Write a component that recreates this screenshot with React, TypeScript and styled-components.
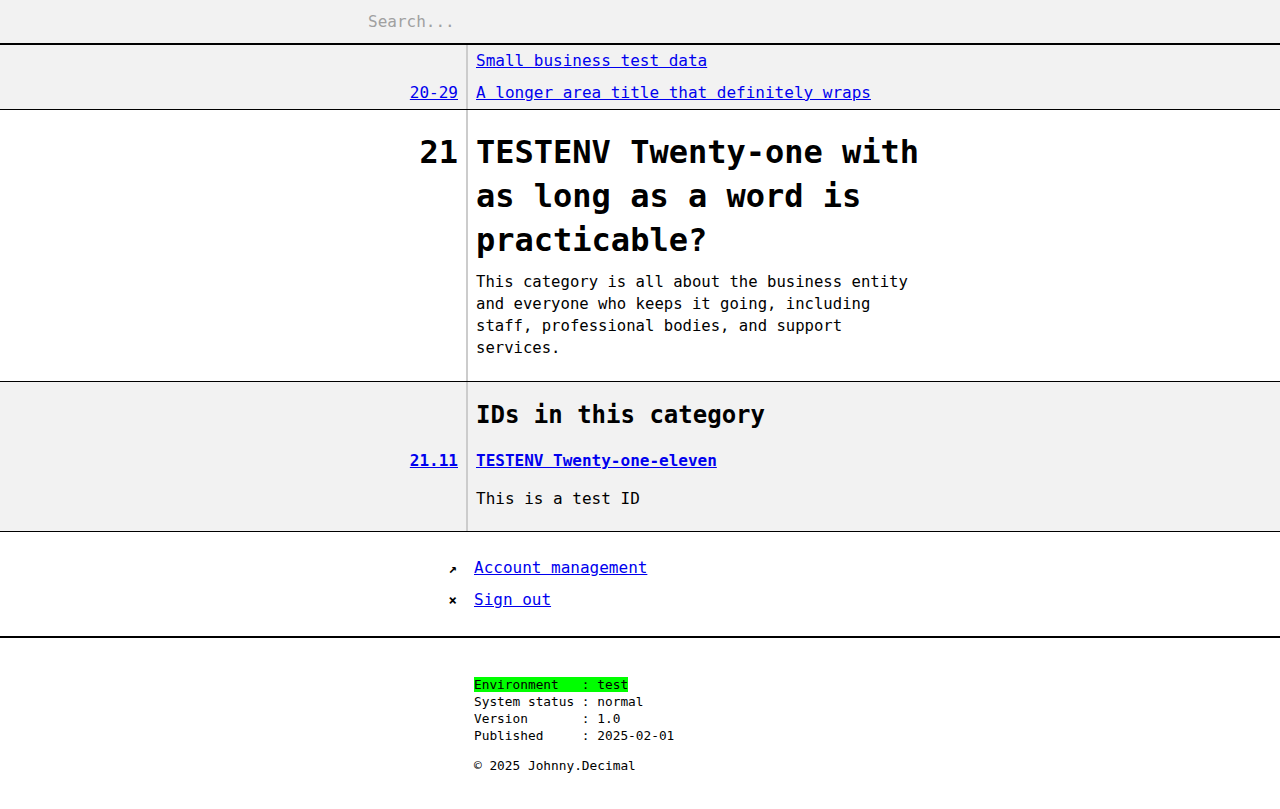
import React from "react";
import styled, { createGlobalStyle } from "styled-components";

const GlobalStyle = createGlobalStyle`
  html, body { margin: 0; padding: 0; background: #fff; }
  body {
    font-family: "DejaVu Sans Mono", "Liberation Mono", monospace;
    font-size: 16px;
    color: #000;
  }
  a { color: #0000ee; }
`;

const SearchBar = styled.header`
  height: 43px;
  background: #f2f2f2;
  border-bottom: 2px solid #000;
  display: flex;
  justify-content: center;
  align-items: center;
`;

const SearchInput = styled.input`
  width: 544px;
  border: none;
  background: transparent;
  font-family: inherit;
  font-size: 16px;
  padding: 0;
  outline: none;
  color: #000;
  &::placeholder { color: #a0a0a0; }
`;

const Section = styled.section<{ $grey?: boolean }>`
  background: ${(p) => (p.$grey ? "#f2f2f2" : "#fff")};
  border-bottom: 1px solid #000;
`;

const Row = styled.div`
  display: grid;
  grid-template-columns: 466px 1fr;
`;

const Left = styled.div<{ $pt?: number; $lh?: number; $size?: number; $bold?: boolean; $end?: boolean }>`
  text-align: right;
  padding-right: 8px;
  padding-top: ${(p) => p.$pt ?? 0}px;
  line-height: ${(p) => p.$lh ?? 32}px;
  font-size: ${(p) => p.$size ?? 16}px;
  font-weight: ${(p) => (p.$bold ? 700 : 400)};
  align-self: ${(p) => (p.$end ? "end" : "start")};
`;

const Right = styled.div<{ $pt?: number; $pb?: number }>`
  border-left: 2px solid #cccccc;
  padding: ${(p) => p.$pt ?? 0}px 8px ${(p) => p.$pb ?? 0}px 8px;
  line-height: 32px;
`;

const NavLinks = styled.div`
  display: flex;
  flex-direction: column;
  line-height: 32px;
`;

const Title = styled.h1`
  margin: 0;
  font-size: 32px;
  line-height: 44px;
  font-weight: 700;
  max-width: 455px;
`;

const Desc = styled.p`
  margin: 9px 0 0;
  font-size: 15.6px;
  line-height: 22px;
  max-width: 455px;
`;

const SubHeading = styled.h2`
  margin: 0;
  font-size: 24px;
  line-height: 32px;
  font-weight: 700;
`;

const IdLink = styled.a`
  font-weight: 700;
`;

const Plain = styled.div`
  line-height: 32px;
`;

const Actions = styled.nav`
  padding: 20px 0 20px;
  border-bottom: 2px solid #000;
`;

const ActionRow = styled.div`
  display: grid;
  grid-template-columns: 466px 1fr;
  line-height: 32px;
`;

const Icon = styled.span`
  text-align: right;
  padding-right: 9px;
  font-weight: 700;
  font-size: 14px;
`;

const ActionText = styled.span`
  padding-left: 8px;
`;

const Footer = styled.footer`
  padding: 38px 0 30px 474px;
  font-size: 12.8px;
  line-height: 17px;
`;

const Info = styled.pre`
  margin: 0;
  font-family: inherit;
  font-size: inherit;
  line-height: inherit;
`;

const Highlight = styled.span`
  background: #00ff00;
`;

const Copy = styled.div`
  margin-top: 13px;
`;

export default function App() {
  return (
    <>
      <GlobalStyle />
      <SearchBar>
        <SearchInput placeholder="Search..." />
      </SearchBar>

      <Section $grey>
        <Row>
          <Left $end>
            <a href="#">20-29</a>
          </Left>
          <Right>
            <NavLinks>
              <a href="#">Small business test data</a>
              <a href="#">A longer area title that definitely wraps</a>
            </NavLinks>
          </Right>
        </Row>
      </Section>

      <Section>
        <Row>
          <Left $pt={20} $lh={44} $size={32} $bold>
            21
          </Left>
          <Right $pt={20} $pb={22}>
            <Title>TESTENV Twenty-one with as long as a word is practicable?</Title>
            <Desc>
              This category is all about the business entity and everyone who keeps it going,
              including staff, professional bodies, and support services.
            </Desc>
          </Right>
        </Row>
      </Section>

      <Section $grey>
        <Row>
          <Left />
          <Right $pt={17} $pb={14}>
            <SubHeading>IDs in this category</SubHeading>
          </Right>
        </Row>
        <Row>
          <Left $bold>
            <a href="#">21.11</a>
          </Left>
          <Right>
            <IdLink href="#">TESTENV Twenty-one-eleven</IdLink>
          </Right>
        </Row>
        <Row>
          <Left />
          <Right $pt={6} $pb={16}>
            <Plain>This is a test ID</Plain>
          </Right>
        </Row>
      </Section>

      <Actions>
        <ActionRow>
          <Icon>↗</Icon>
          <ActionText>
            <a href="#">Account management</a>
          </ActionText>
        </ActionRow>
        <ActionRow>
          <Icon>×</Icon>
          <ActionText>
            <a href="#">Sign out</a>
          </ActionText>
        </ActionRow>
      </Actions>

      <Footer>
        <Info>
          <Highlight>Environment   : test</Highlight>
          {"\n"}System status : normal{"\n"}Version       : 1.0{"\n"}Published     : 2025-02-01
        </Info>
        <Copy>© 2025 Johnny.Decimal</Copy>
      </Footer>
    </>
  );
}
